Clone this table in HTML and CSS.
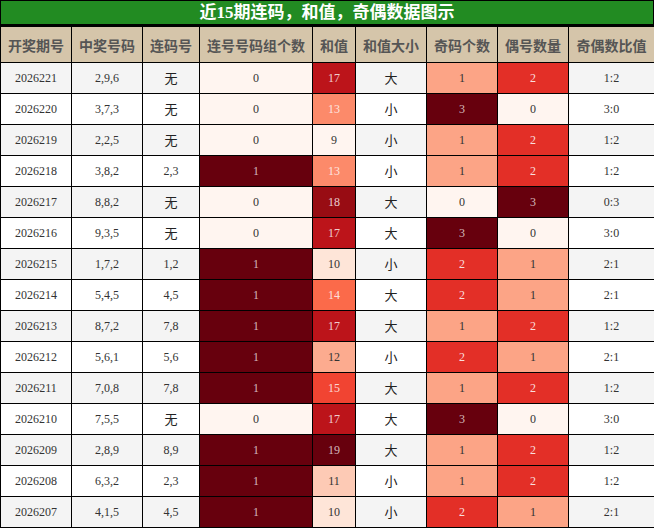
FILE: index.html
```html
<!DOCTYPE html>
<html lang="zh">
<head>
<meta charset="utf-8">
<link rel="stylesheet" href="styles.css">
</head>
<body>
<div class="chart">
  <div class="title">近15期连码，和值，奇偶数据图示</div>
  <table class="grid">
    <colgroup>
      <col class="c1"><col class="c2"><col class="c3"><col class="c4"><col class="c5"><col class="c6"><col class="c7"><col class="c8"><col class="c9">
    </colgroup>
    <thead>
      <tr><th>开奖期号</th><th>中奖号码</th><th>连码号</th><th>连号号码组个数</th><th>和值</th><th>和值大小</th><th>奇码个数</th><th>偶号数量</th><th>奇偶数比值</th></tr>
    </thead>
    <tbody>
      <tr class="odd"><td>2026221</td><td>2,9,6</td><td class="cn">无</td><td class="h0">0</td><td class="s17">17</td><td class="cn">大</td><td class="q1">1</td><td class="q2">2</td><td>1:2</td></tr>
      <tr class="even"><td>2026220</td><td>3,7,3</td><td class="cn">无</td><td class="h0">0</td><td class="s13">13</td><td class="cn">小</td><td class="q3">3</td><td class="q0">0</td><td>3:0</td></tr>
      <tr class="odd"><td>2026219</td><td>2,2,5</td><td class="cn">无</td><td class="h0">0</td><td class="s9">9</td><td class="cn">小</td><td class="q1">1</td><td class="q2">2</td><td>1:2</td></tr>
      <tr class="even"><td>2026218</td><td>3,8,2</td><td>2,3</td><td class="h1">1</td><td class="s13">13</td><td class="cn">小</td><td class="q1">1</td><td class="q2">2</td><td>1:2</td></tr>
      <tr class="odd"><td>2026217</td><td>8,8,2</td><td class="cn">无</td><td class="h0">0</td><td class="s18">18</td><td class="cn">大</td><td class="q0">0</td><td class="q3">3</td><td>0:3</td></tr>
      <tr class="even"><td>2026216</td><td>9,3,5</td><td class="cn">无</td><td class="h0">0</td><td class="s17">17</td><td class="cn">大</td><td class="q3">3</td><td class="q0">0</td><td>3:0</td></tr>
      <tr class="odd"><td>2026215</td><td>1,7,2</td><td>1,2</td><td class="h1">1</td><td class="s10">10</td><td class="cn">小</td><td class="q2">2</td><td class="q1">1</td><td>2:1</td></tr>
      <tr class="even"><td>2026214</td><td>5,4,5</td><td>4,5</td><td class="h1">1</td><td class="s14">14</td><td class="cn">大</td><td class="q2">2</td><td class="q1">1</td><td>2:1</td></tr>
      <tr class="odd"><td>2026213</td><td>8,7,2</td><td>7,8</td><td class="h1">1</td><td class="s17">17</td><td class="cn">大</td><td class="q1">1</td><td class="q2">2</td><td>1:2</td></tr>
      <tr class="even"><td>2026212</td><td>5,6,1</td><td>5,6</td><td class="h1">1</td><td class="s12">12</td><td class="cn">小</td><td class="q2">2</td><td class="q1">1</td><td>2:1</td></tr>
      <tr class="odd"><td>2026211</td><td>7,0,8</td><td>7,8</td><td class="h1">1</td><td class="s15">15</td><td class="cn">大</td><td class="q1">1</td><td class="q2">2</td><td>1:2</td></tr>
      <tr class="even"><td>2026210</td><td>7,5,5</td><td class="cn">无</td><td class="h0">0</td><td class="s17">17</td><td class="cn">大</td><td class="q3">3</td><td class="q0">0</td><td>3:0</td></tr>
      <tr class="odd"><td>2026209</td><td>2,8,9</td><td>8,9</td><td class="h1">1</td><td class="s19">19</td><td class="cn">大</td><td class="q1">1</td><td class="q2">2</td><td>1:2</td></tr>
      <tr class="even"><td>2026208</td><td>6,3,2</td><td>2,3</td><td class="h1">1</td><td class="s11">11</td><td class="cn">小</td><td class="q1">1</td><td class="q2">2</td><td>1:2</td></tr>
      <tr class="odd"><td>2026207</td><td>4,1,5</td><td>4,5</td><td class="h1">1</td><td class="s10">10</td><td class="cn">小</td><td class="q2">2</td><td class="q1">1</td><td>2:1</td></tr>
    </tbody>
  </table>
</div>
</body>
</html>
```
FILE: styles.css
```css
html, body {
  margin: 0;
  padding: 0;
  background: #ffffff;
}
.chart {
  width: 654px;
  font-family: "Liberation Serif", "Noto Sans CJK SC", serif;
}
.title {
  height: 26px;
  box-sizing: border-box;
  background: #228b22;
  color: #ffffff;
  font-weight: bold;
  font-size: 17px;
  line-height: 24px;
  text-align: center;
  border: 1px solid #000;
  border-bottom: 2px solid #000;
}
.grid {
  border-collapse: collapse;
  table-layout: fixed;
  width: 654px;
}
.c1 { width: 71px; }
.c2 { width: 71px; }
.c3 { width: 57px; }
.c4 { width: 113px; }
.c5 { width: 43px; }
.c6 { width: 71px; }
.c7 { width: 71px; }
.c8 { width: 71px; }
.c9 { width: 86px; }
.grid th, .grid td {
  border: 1px solid #000;
  text-align: center;
  vertical-align: middle;
  padding: 0;
}
.grid th {
  height: 35px;
  background: #d5c5aa;
  color: #555555;
  font-family: "Noto Sans CJK SC", sans-serif;
  font-weight: bold;
  font-size: 14px;
}
.grid td {
  height: 30px;
  font-size: 12px;
  line-height: 14px;
  color: #333333;
}
.grid td.cn {
  font-family: "Noto Sans CJK SC", sans-serif;
  font-size: 13px;
  line-height: 13px;
  height: 28px;
  padding-bottom: 2px;
  color: #222222;
}
.odd td { background: #f4f4f4; }
.even td { background: #ffffff; }

/* heat cells */
.grid td.h0, .grid td.q0, .grid td.s9 { background: #fff5f0; color: #333; }
.grid td.h1, .grid td.q3, .grid td.s19 { background: #67000d; color: rgba(255,255,255,0.72); }
.grid td.q1 { background: #fca486; color: #333; }
.grid td.q2 { background: #e32f27; color: rgba(255,255,255,0.85); }
.grid td.s10 { background: #fee5d8; color: #333; }
.grid td.s11 { background: #fdcab5; color: #333; }
.grid td.s12 { background: #fcab8f; color: #333; }
.grid td.s13 { background: #fc8a6a; color: rgba(255,255,255,0.8); }
.grid td.s14 { background: #fb6a4a; color: rgba(255,255,255,0.8); }
.grid td.s15 { background: #f14432; color: rgba(255,255,255,0.8); }
.grid td.s17 { background: #bc141a; color: rgba(255,255,255,0.8); }
.grid td.s18 { background: #980c13; color: rgba(255,255,255,0.8); }
```
